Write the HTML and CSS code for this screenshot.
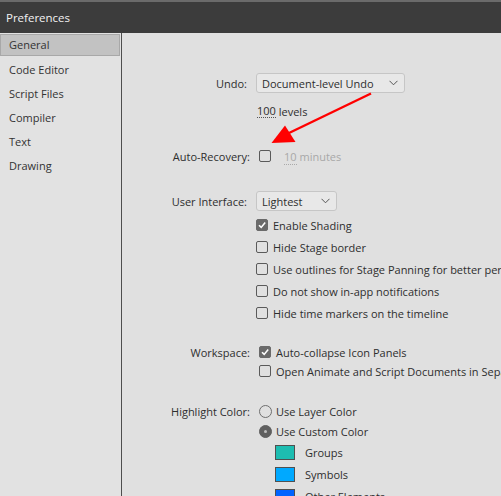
FILE: index.html
```html
<!DOCTYPE html>
<html>
<head>
<meta charset="utf-8">
<link rel="stylesheet" href="styles.css">
</head>
<body>
<div class="titlebar"><span>Preferences</span></div>
<div class="window">
  <nav class="sidebar">
    <div class="nav-item active">General</div>
    <div class="nav-item first">Code Editor</div>
    <div class="nav-item">Script Files</div>
    <div class="nav-item">Compiler</div>
    <div class="nav-item">Text</div>
    <div class="nav-item">Drawing</div>
  </nav>
  <main class="panel">
    <div class="row r-undo">
      <span class="lbl dd">Undo:</span>
      <div class="select w-undo"><span>Document-level Undo</span><svg class="chev" width="9" height="6" viewBox="0 0 9 6"><polyline points="0.5,0.8 4.5,4.8 8.5,0.8" fill="none" stroke="#555" stroke-width="1"/></svg></div>
    </div>
    <div class="row r-levels"><span class="num">100</span>&nbsp;levels</div>
    <div class="row r-auto">
      <span class="lbl">Auto-Recovery:</span>
      <span class="cb cb-off"></span>
      <span class="muted"><span class="num dim">10</span> minutes</span>
    </div>
    <div class="row r-ui">
      <span class="lbl dd">User Interface:</span>
      <div class="select w-ui"><span>Lightest</span><svg class="chev" width="9" height="6" viewBox="0 0 9 6"><polyline points="0.5,0.8 4.5,4.8 8.5,0.8" fill="none" stroke="#555" stroke-width="1"/></svg></div>
    </div>
    <div class="opts">
      <div class="opt"><span class="cb cb-on"><svg width="10" height="10" viewBox="0 0 10 10"><polyline points="2,5.2 4.2,7.4 8.2,2.6" fill="none" stroke="#fff" stroke-width="1.6"/></svg></span><span class="txt">Enable Shading</span></div>
      <div class="opt"><span class="cb cb-off"></span><span class="txt">Hide Stage border</span></div>
      <div class="opt"><span class="cb cb-off"></span><span class="txt">Use outlines for Stage Panning for better performance</span></div>
      <div class="opt"><span class="cb cb-off"></span><span class="txt">Do not show in-app notifications</span></div>
      <div class="opt"><span class="cb cb-off"></span><span class="txt">Hide time markers on the timeline</span></div>
    </div>
    <div class="row r-ws">
      <span class="lbl">Workspace:</span>
      <span class="cb cb-on"><svg width="10" height="10" viewBox="0 0 10 10"><polyline points="2,5.2 4.2,7.4 8.2,2.6" fill="none" stroke="#fff" stroke-width="1.6"/></svg></span><span class="txt">Auto-collapse Icon Panels</span>
    </div>
    <div class="row r-ws2"><span class="cb cb-off"></span><span class="txt">Open Animate and Script Documents in Separate Windows</span></div>
    <div class="row r-hl">
      <span class="lbl">Highlight Color:</span>
      <span class="radio"></span><span class="rtxt">Use Layer Color</span>
    </div>
    <div class="row r-hl2"><span class="radio on"></span><span class="rtxt">Use Custom Color</span></div>
    <div class="row sw-row"><span class="swatch sw-groups"></span><span class="swtxt">Groups</span></div>
    <div class="row sw-row"><span class="swatch sw-symbols"></span><span class="swtxt">Symbols</span></div>
    <div class="row sw-row"><span class="swatch sw-other"></span><span class="swtxt">Other Elements</span></div>
  </main>
</div>
<svg class="annot" width="501" height="496" viewBox="0 0 501 496">
  <line x1="371" y1="93.5" x2="289" y2="133" stroke="#ff0000" stroke-width="2.4"/>
  <polygon points="271.5,143 285,125.5 295.5,142" fill="#ff0000"/>
</svg>
</body>
</html>
```
FILE: styles.css
```css
html, body {
  margin: 0;
  padding: 0;
}
body {
  width: 501px;
  height: 496px;
  overflow: hidden;
  position: relative;
  background: #e0e0e0;
  color: #2e2e2e;
  font-family: "Open Sans", "Liberation Sans", sans-serif;
  font-size: 11px;
}
.titlebar {
  height: 33px;
  box-sizing: border-box;
  border-top: 2px solid #6b6b6b;
  background: #3c3c3c;
  color: #f2f2f2;
  display: flex;
  align-items: center;
  padding-left: 6px;
  font-size: 11.5px;
}
.window {
  display: flex;
  height: 463px;
}
.sidebar {
  width: 121px;
  flex: none;
  border-right: 1px solid #4e4e4e;
  background: #e2e2e2;
  padding-top: 1px;
}
.nav-item {
  height: 24px;
  line-height: 24px;
  padding-left: 9px;
  color: #333;
}
.nav-item.active {
  height: 22px;
  line-height: 20px;
  box-sizing: border-box;
  border: 1px solid #a8a8a8;
  background: #c2c2c2;
  padding-left: 8px;
  width: 120px;
}
.nav-item.first {
  margin-top: 2px;
}
.panel {
  flex: 1;
  min-width: 0;
  overflow: hidden;
  white-space: nowrap;
  padding-top: 40px;
}
.row {
  display: flex;
  align-items: center;
}
.lbl {
  width: 128px;
  flex: none;
  text-align: right;
  box-sizing: border-box;
}
.lbl.dd {
  padding-right: 3px;
}
.select {
  margin-left: 6px;
  height: 20px;
  box-sizing: border-box;
  border: 1px solid #c6c6c6;
  border-radius: 3px;
  background: #e8e8e8;
  display: flex;
  align-items: center;
  justify-content: space-between;
  padding: 0 6px 0 5px;
}
.w-undo { width: 149px; }
.w-ui { width: 81px; }
.chev { flex: none; }
.r-undo { height: 20px; }
.r-levels {
  height: 16px;
  margin-top: 10px;
  padding-left: 135px;
}
.num {
  border-bottom: 1px dotted #555;
  line-height: 12px;
}
.num.dim {
  border-bottom-color: #aaa;
}
.r-auto {
  height: 16px;
  margin-top: 29px;
}
.r-auto .cb { margin-left: 9px; }
.muted {
  color: #a8a8a8;
  margin-left: 13px;
}
.r-ui {
  height: 20px;
  margin-top: 27px;
}
.cb {
  width: 12px;
  height: 12px;
  box-sizing: border-box;
  border: 1px solid #5a5a5a;
  border-radius: 2px;
  flex: none;
  display: flex;
  align-items: center;
  justify-content: center;
}
.cb-on {
  background: #6a6a6a;
  border-color: #6a6a6a;
}
.txt {
  margin-left: 5px;
}
.opts {
  margin-top: 3px;
}
.opt {
  display: flex;
  align-items: center;
  height: 22px;
  padding-left: 134px;
}
.r-ws {
  height: 20px;
  margin-top: 18px;
}
.r-ws .cb { margin-left: 9px; }
.r-ws2 {
  height: 18px;
  padding-left: 137px;
}
.r-hl {
  height: 20px;
  margin-top: 21px;
}
.r-hl .radio { margin-left: 9px; }
.r-hl2 {
  height: 20px;
  padding-left: 137px;
}
.radio {
  width: 13px;
  height: 13px;
  box-sizing: border-box;
  border: 1px solid #6e6e6e;
  border-radius: 50%;
  flex: none;
  position: relative;
}
.radio.on {
  background: #5f5f5f;
  border-color: #5f5f5f;
}
.radio.on::after {
  content: "";
  position: absolute;
  left: 4px;
  top: 4px;
  width: 3px;
  height: 3px;
  border-radius: 50%;
  background: #bdbdbd;
}
.rtxt {
  margin-left: 4px;
}
.sw-row {
  height: 22px;
  padding-left: 153px;
}
.swatch {
  width: 20px;
  height: 15px;
  box-sizing: border-box;
  border: 1px solid #505050;
  flex: none;
}
.sw-groups { background: #1dbdb1; }
.sw-symbols { background: #00a9ff; }
.sw-other { background: #0063ff; }
.swtxt {
  margin-left: 10px;
}
.annot {
  position: absolute;
  left: 0;
  top: 0;
  pointer-events: none;
}
```
